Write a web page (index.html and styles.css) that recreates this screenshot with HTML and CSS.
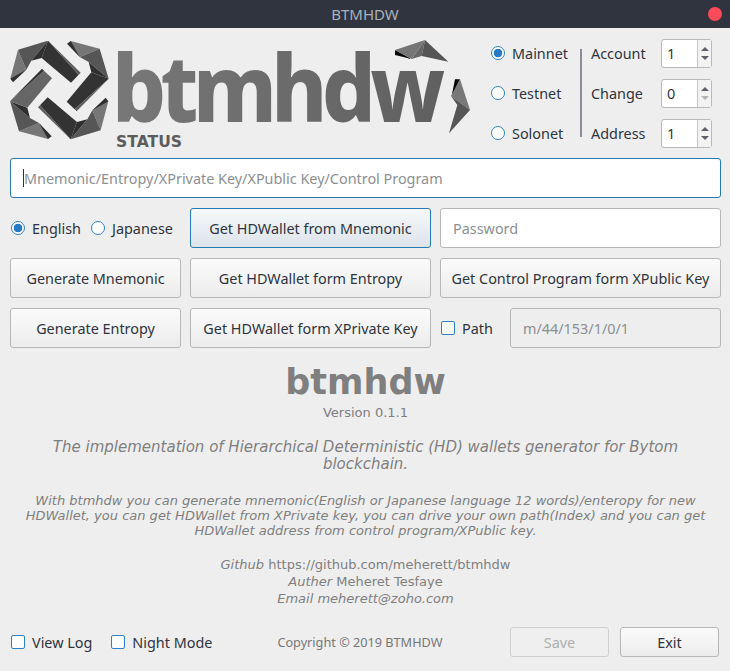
FILE: index.html
```html
<!DOCTYPE html>
<html lang="en">
<head>
  <meta charset="UTF-8">
  <title>BTMHDW</title>
  <link rel="stylesheet" href="styles.css">
</head>
<body>
  <div class="titlebar">
    <span>BTMHDW</span>
    <i class="close-dot"></i>
  </div>

  <main class="window">
    <section class="top">
      <svg class="logo-mark" viewBox="30 33 300 300">
        <defs>
          <g id="arm">
            <polygon points="54,59 79,119 39,149 31,146" fill="#767676"/>
            <polygon points="31,146 39,157 79,119" fill="#2f2f2f"/>
            <polygon points="54,59 144,32 94,92 79,119" fill="#565656"/>
            <polygon points="144,32 94,92 125,84" fill="#2f2f2f"/>
            <polygon class="facet-in" points="144,32 125,84 213,158 236,134"/>
            <polygon class="facet-out" points="144,32 242,128 236,134"/>
          </g>
        </defs>
        <use href="#arm"/>
        <use href="#arm" transform="rotate(90 178 180)"/>
        <use href="#arm" transform="rotate(180 178 180)"/>
        <use class="flip" href="#arm" transform="rotate(270 178 180)"/>
      </svg>

      <div class="logo-text">
        <div class="logo-word">btmhdw</div>
        <svg class="logo-accent" viewBox="0 0 300 360">
          <polygon points="45,60 45,75 95,87" fill="#000"/>
          <polygon points="45,60 135,30 95,87" fill="#757575"/>
          <polygon points="135,30 95,87 125,78" fill="#666"/>
          <polygon points="135,30 205,95 125,78" fill="#555"/>
          <polygon points="225,148 240,148 215,198" fill="#000"/>
          <polygon points="240,148 213,198 270,240" fill="#787878"/>
          <polygon points="213,198 232,225 207,310 270,240" fill="#565656"/>
        </svg>
        <div class="status">STATUS</div>
      </div>

      <div class="network">
        <label class="option"><i class="radio checked"></i>Mainnet</label>
        <label class="option"><i class="radio"></i>Testnet</label>
        <label class="option"><i class="radio"></i>Solonet</label>
      </div>

      <div class="divider"></div>

      <div class="indexes">
        <div class="index-row">
          <span>Account</span>
          <div class="spin"><b>1</b><div class="arrows"><i class="up"></i><i class="down"></i></div></div>
        </div>
        <div class="index-row">
          <span>Change</span>
          <div class="spin"><b>0</b><div class="arrows"><i class="up"></i><i class="down off"></i></div></div>
        </div>
        <div class="index-row">
          <span>Address</span>
          <div class="spin"><b>1</b><div class="arrows"><i class="up"></i><i class="down"></i></div></div>
        </div>
      </div>
    </section>

    <div class="field main-field"><i class="caret"></i>Mnemonic/Entropy/XPrivate Key/XPublic Key/Control Program</div>

    <section class="controls">
      <div class="lang">
        <label class="option"><i class="radio checked"></i>English</label>
        <label class="option"><i class="radio"></i>Japanese</label>
      </div>
      <button class="btn focused">Get HDWallet from Mnemonic</button>
      <div class="field">Password</div>

      <button class="btn">Generate Mnemonic</button>
      <button class="btn">Get HDWallet form Entropy</button>
      <button class="btn">Get Control Program form XPublic Key</button>

      <button class="btn">Generate Entropy</button>
      <button class="btn">Get HDWallet form XPrivate Key</button>
      <div class="path-cell">
        <label class="option"><i class="check"></i>Path</label>
        <div class="field disabled">m/44/153/1/0/1</div>
      </div>
    </section>

    <section class="about">
      <h1>btmhdw</h1>
      <p class="version">Version 0.1.1</p>
      <p class="lead">The implementation of Hierarchical Deterministic (HD) wallets generator for Bytom blockchain.</p>
      <p class="desc">With btmhdw you can generate mnemonic(English or Japanese language 12 words)/enteropy for new HDWallet, you can get HDWallet from XPrivate key, you can drive your own path(Index) and you can get HDWallet address from control program/XPublic key.</p>
      <p class="credits">
        <em>Github</em> https://github.com/meherett/btmhdw<br>
        <em>Auther</em> Meheret Tesfaye<br>
        <em>Email meherett@zoho.com</em>
      </p>
    </section>

    <footer class="bottom">
      <label class="option"><i class="check"></i>View Log</label>
      <label class="option night"><i class="check"></i>Night Mode</label>
      <span class="copyright">Copyright © 2019 BTMHDW</span>
      <button class="btn small save off">Save</button>
      <button class="btn small exit">Exit</button>
    </footer>
  </main>
</body>
</html>
```

FILE: styles.css
```css
* {
  box-sizing: border-box;
}

html, body {
  margin: 0;
  height: 100%;
}

body {
  width: 730px;
  height: 671px;
  overflow: hidden;
  background: #eeeeee;
  color: #2f343f;
  font-family: "Noto Sans", sans-serif;
  font-size: 14.4px;
}

.titlebar {
  position: relative;
  height: 28px;
  background: #2f343f;
  color: #a9b0bd;
  font-size: 15px;
  line-height: 28px;
  text-align: center;
}

.close-dot {
  position: absolute;
  top: 7px;
  right: 8px;
  width: 14px;
  height: 14px;
  border-radius: 50%;
  background: #fc4b58;
}

.window {
  padding: 0 9px 0 10px;
}

/* top row */
.top {
  display: flex;
  height: 130px;
}

.logo-mark {
  width: 100px;
  height: 100px;
  margin-top: 13px;
  flex-shrink: 0;
  --in: #333333;
  --out: #5c5c5c;
}

.logo-mark .flip {
  --in: #666666;
  --out: #333333;
}

.facet-in {
  fill: var(--in);
}

.facet-out {
  fill: var(--out);
}

.logo-text {
  position: relative;
  width: 381px;
}

.logo-word {
  margin: 14px 0 0 2px;
  height: 90px;
  font-size: 92px;
  font-weight: 800;
  letter-spacing: -6px;
  line-height: 90px;
  background: linear-gradient(90deg, #787878, #5e5e5e);
  -webkit-background-clip: text;
  background-clip: text;
  color: transparent;
  transform: scaleX(0.924);
  transform-origin: left;
}

.logo-accent {
  position: absolute;
  top: 2px;
  left: 270px;
  width: 100px;
  height: 120px;
}

.status {
  margin: 0 0 0 6px;
  color: #5c5c5c;
  font-family: "DejaVu Sans", sans-serif;
  font-size: 15.6px;
  font-weight: 700;
  line-height: 20px;
}

.network {
  display: flex;
  flex-direction: column;
  gap: 20px;
  width: 89px;
  padding-top: 15px;
}

.option {
  display: flex;
  align-items: center;
  gap: 7px;
  height: 20px;
  white-space: nowrap;
}

.radio, .check {
  flex-shrink: 0;
  width: 14px;
  height: 14px;
  border: 1px solid #2f7fc8;
  background: #fff;
}

.radio {
  border-radius: 50%;
}

.check {
  border-radius: 2px;
}

.radio.checked {
  background: radial-gradient(circle, #2679c4 0 4px, #fff 4.6px);
}

.divider {
  width: 2px;
  height: 88px;
  margin-top: 21px;
  background: #8a8d95;
}

.indexes {
  display: flex;
  flex-direction: column;
  gap: 10px;
  padding: 10px 0 0 9px;
}

.index-row {
  display: flex;
  align-items: center;
  width: 121px;
  height: 30px;
  justify-content: space-between;
}

.spin {
  display: flex;
  width: 51px;
  height: 29px;
  background: #fff;
  border: 1px solid #b9b9b9;
  border-radius: 3px;
}

.spin b {
  flex: 1;
  padding-left: 5px;
  font-weight: 400;
  line-height: 27px;
}

.arrows {
  display: flex;
  flex-direction: column;
  align-items: center;
  justify-content: center;
  gap: 5px;
  width: 14px;
  background: #f3f3f3;
  border-left: 1px solid #c8c8c8;
}

.arrows i {
  width: 0;
  height: 0;
  border-left: 4px solid transparent;
  border-right: 4px solid transparent;
}

.arrows .up {
  border-bottom: 4px solid #5c616c;
}

.arrows .down {
  border-top: 4px solid #5c616c;
}

.arrows .down.off {
  border-top-color: #b5b5b5;
}

/* fields and buttons */
.field {
  display: flex;
  align-items: center;
  height: 40px;
  padding-left: 12px;
  background: #fff;
  border: 1px solid #b7b7b7;
  border-radius: 3px;
  color: #8c8f94;
}

.main-field {
  width: 711px;
  margin-bottom: 10px;
  border-color: #2679b5;
}

.caret {
  width: 1px;
  height: 18px;
  background: #2f343f;
}

.controls {
  display: grid;
  grid-template-columns: 171px 241px 281px;
  grid-auto-rows: 40px;
  gap: 10px 9px;
}

.btn {
  padding: 0;
  background: linear-gradient(#fbfbfb, #ececec);
  border: 1px solid #b7b7b7;
  border-radius: 3px;
  color: #2f343f;
  font-family: inherit;
  font-size: 14.4px;
}

.btn.focused {
  background: linear-gradient(#f6f9fb, #dde3e9);
  border-color: #2679b5;
}

.btn.off {
  background: #efefef;
  border-color: #cfcfcf;
  color: #aeaeae;
}

.lang {
  display: flex;
  align-items: center;
  gap: 10px;
  padding-left: 1px;
}

.path-cell {
  display: flex;
  align-items: center;
  justify-content: space-between;
  padding-left: 1px;
}

.field.disabled {
  width: 211px;
  background: #eeeeee;
}

/* about text */
.about {
  margin-top: 14px;
  color: #7f7f7f;
  font-family: "DejaVu Sans", sans-serif;
  text-align: center;
}

.about h1 {
  margin: 0;
  font-size: 35px;
  line-height: 40px;
}

.about p {
  margin: 0;
}

.version {
  font-size: 13px;
  line-height: 21px;
}

.lead {
  padding-top: 16px;
  font-size: 15px;
  font-style: italic;
  line-height: 17px;
}

.desc {
  padding-top: 20px;
  font-size: 13px;
  font-style: italic;
  line-height: 15px;
}

.credits {
  padding-top: 18px;
  font-size: 13px;
  line-height: 17px;
}

/* bottom row */
.bottom {
  display: flex;
  align-items: center;
  height: 30px;
  margin-top: 20px;
  padding-left: 1px;
}

.night {
  margin-left: 19px;
}

.copyright {
  margin-left: 65px;
  color: #777;
  font-size: 12.7px;
}

.btn.small {
  width: 99px;
  height: 30px;
}

.save {
  margin-left: auto;
}

.exit {
  margin: 0 2px 0 11px;
}
```
